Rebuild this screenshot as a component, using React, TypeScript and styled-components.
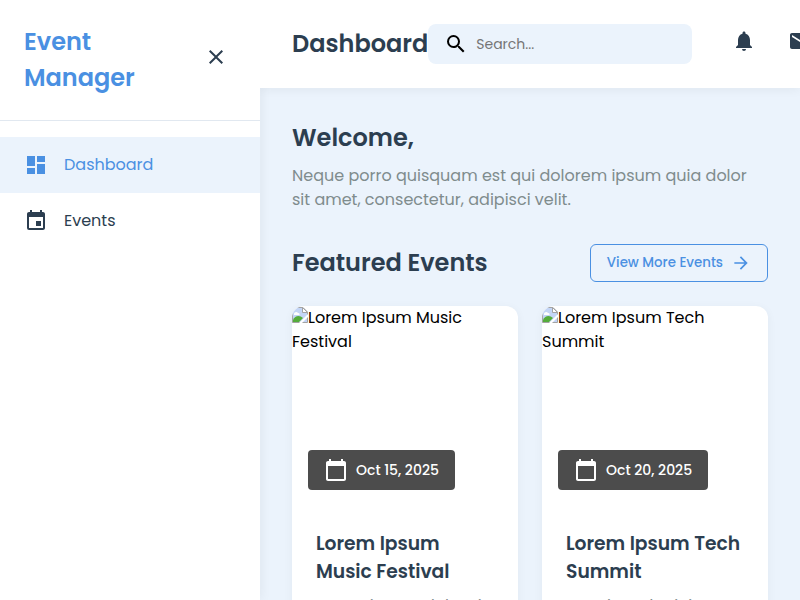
import React from "react";
import styled, { createGlobalStyle } from "styled-components";
import {
  MdArrowForward,
  MdCalendarToday,
  MdClose,
  MdDashboard,
  MdEvent,
  MdMail,
  MdNotifications,
  MdSearch,
} from "react-icons/md";

const colors = {
  primary: "#4a90e2",
  dark: "#2c3e50",
  muted: "#7f8c8d",
  pale: "#ebf3fc",
  line: "#e1e8f0",
};

const GlobalStyle = createGlobalStyle`
  *, *::before, *::after { box-sizing: border-box; }
  body {
    margin: 0;
    overflow: hidden;
    background: ${colors.pale};
    color: #000;
    font-family: Poppins, Inter, sans-serif;
    font-size: 16px;
    line-height: 24px;
  }
  h1, h2, h3, p { margin: 0; }
  button, input { font-family: inherit; }
`;

const Shell = styled.div`
  display: grid;
  grid-template-columns: 260px minmax(0, 1fr);
  height: 100vh;
  overflow: hidden;
`;

const Sidebar = styled.aside`
  position: relative;
  background: #fff;
  box-shadow: 2px 0 10px rgba(0, 0, 0, 0.05);
`;

const Brand = styled.div`
  display: flex;
  align-items: center;
  justify-content: space-between;
  padding: 24px;
  border-bottom: 1px solid ${colors.line};
`;

const BrandName = styled.h2`
  color: ${colors.primary};
  font-size: 24px;
  font-weight: 600;
  line-height: 36px;
`;

const IconButton = styled.button`
  display: flex;
  flex: none;
  padding: 5px 8px 11px;
  border: 0;
  background: none;
  color: ${colors.dark};
  cursor: pointer;
`;

const Nav = styled.nav`
  display: flex;
  flex-direction: column;
  padding: 16px 0;
`;

const NavLink = styled.a<{ $active?: boolean }>`
  display: flex;
  align-items: center;
  gap: 16px;
  padding: 16px 24px;
  background: ${(p) => (p.$active ? colors.pale : "transparent")};
  color: ${(p) => (p.$active ? colors.primary : colors.dark)};
  text-decoration: none;
`;

const Main = styled.main`
  min-width: 0;
  overflow: hidden;
`;

const TopBar = styled.header`
  position: relative;
  z-index: 1;
  display: flex;
  align-items: center;
  justify-content: space-between;
  padding: 24px 32px;
  background: #fff;
  box-shadow: 0 2px 10px rgba(0, 0, 0, 0.05);
`;

const Heading = styled.h2`
  color: ${colors.dark};
  font-size: 24px;
  font-weight: 600;
  line-height: 36px;
`;

const PageTitle = styled(Heading).attrs({ as: "h1" })`
  flex: none;
`;

const TopActions = styled.div`
  display: flex;
  flex: none;
  align-items: center;
  gap: 32px;
`;

const SearchBox = styled.label`
  display: flex;
  align-items: center;
  gap: 8px;
  width: 264px;
  height: 40px;
  padding: 0 16px;
  border-radius: 8px;
  background: ${colors.pale};
`;

const SearchInput = styled.input`
  flex: 1;
  min-width: 0;
  padding: 0;
  border: 0;
  outline: 0;
  background: none;
  font-size: 14px;
  &::placeholder { color: #757575; }
`;

const IconGroup = styled.div`
  display: flex;
  gap: 16px;
`;

const Content = styled.div`
  padding: 32px;
`;

const Intro = styled.p`
  margin-top: 8px;
  color: ${colors.muted};
`;

const SectionHead = styled.div`
  display: flex;
  align-items: center;
  justify-content: space-between;
  margin: 32px 0 24px;
`;

const MoreButton = styled.button`
  display: flex;
  align-items: center;
  gap: 8px;
  height: 38px;
  padding: 0 16px;
  border: 1px solid ${colors.primary};
  border-radius: 6px;
  background: none;
  color: ${colors.primary};
  font-weight: 500;
  cursor: pointer;
`;

const EventGrid = styled.div`
  display: grid;
  grid-template-columns: repeat(2, minmax(0, 1fr));
  gap: 24px;
`;

const Card = styled.article`
  overflow: hidden;
  border-radius: 12px;
  background: #fff;
  box-shadow: 0 2px 10px rgba(0, 0, 0, 0.05);
`;

const Cover = styled.div`
  position: relative;
  height: 200px;
`;

const MissingImage = styled.svg`
  width: 16px;
  height: 16px;
  vertical-align: baseline;
`;

const DateBadge = styled.div`
  position: absolute;
  bottom: 16px;
  left: 16px;
  display: flex;
  align-items: center;
  gap: 8px;
  padding: 8px 16px;
  border-radius: 4px;
  background: rgba(0, 0, 0, 0.7);
  color: #fff;
  font-size: 14px;
  font-weight: 500;
`;

const CardBody = styled.div`
  padding: 24px;
`;

const CardTitle = styled.h3`
  color: ${colors.dark};
  font-weight: 600;
  line-height: 28px;
`;

const CardText = styled.p`
  margin-top: 8px;
  color: ${colors.muted};
`;

const events = [
  {
    title: "Lorem Ipsum Music Festival",
    date: "Oct 15, 2025",
    text: "Lorem ipsum dolor sit amet, consectetur adipiscing elit.",
  },
  {
    title: "Lorem Ipsum Tech Summit",
    date: "Oct 20, 2025",
    text: "Ut enim ad minim veniam, quis nostrud exercitation.",
  },
];

const BrokenPicture = () => (
  <MissingImage viewBox="0 0 16 16" aria-hidden="true">
    <path d="M.5.5H11L15.5 5v10.5H.5z" fill="#c3d5f6" stroke="#a3a3a3" />
    <path d="M2 7c0-2 3-3 4-1 2 0 2 2 1 2H2z" fill="#fff" />
    <path d="M1 15v-2c2-5 7-5 10-2l-4 4z" fill="#55ad3c" />
    <path d="M10.5.5v5h5z" fill="#fff" stroke="#a3a3a3" />
    <path d="M16 7v3l-6 6H7z" fill="#fff" />
  </MissingImage>
);

export default function App() {
  return (
    <>
      <GlobalStyle />
      <Shell>
        <Sidebar>
          <Brand>
            <BrandName>
              Event
              <br />
              Manager
            </BrandName>
            <IconButton aria-label="Close menu">
              <MdClose size={24} />
            </IconButton>
          </Brand>
          <Nav>
            <NavLink href="#dashboard" $active>
              <MdDashboard size={24} />
              Dashboard
            </NavLink>
            <NavLink href="#events">
              <MdEvent size={24} />
              Events
            </NavLink>
          </Nav>
        </Sidebar>
        <Main>
          <TopBar>
            <PageTitle>Dashboard</PageTitle>
            <TopActions>
              <SearchBox>
                <MdSearch size={24} aria-hidden="true" />
                <SearchInput type="text" placeholder="Search..." aria-label="Search" />
              </SearchBox>
              <IconGroup>
                <IconButton aria-label="Notifications">
                  <MdNotifications size={24} />
                </IconButton>
                <IconButton aria-label="Messages">
                  <MdMail size={24} />
                </IconButton>
              </IconGroup>
            </TopActions>
          </TopBar>
          <Content>
            <Heading>Welcome,</Heading>
            <Intro>
              Neque porro quisquam est qui dolorem ipsum quia dolor sit amet,
              consectetur, adipisci velit.
            </Intro>
            <SectionHead>
              <Heading>Featured Events</Heading>
              <MoreButton>
                View More Events
                <MdArrowForward size={20} />
              </MoreButton>
            </SectionHead>
            <EventGrid>
              {events.map((event) => (
                <Card key={event.title}>
                  <Cover>
                    <BrokenPicture />
                    {event.title}
                    <DateBadge>
                      <MdCalendarToday size={24} />
                      {event.date}
                    </DateBadge>
                  </Cover>
                  <CardBody>
                    <CardTitle>{event.title}</CardTitle>
                    <CardText>{event.text}</CardText>
                  </CardBody>
                </Card>
              ))}
            </EventGrid>
          </Content>
        </Main>
      </Shell>
    </>
  );
}
